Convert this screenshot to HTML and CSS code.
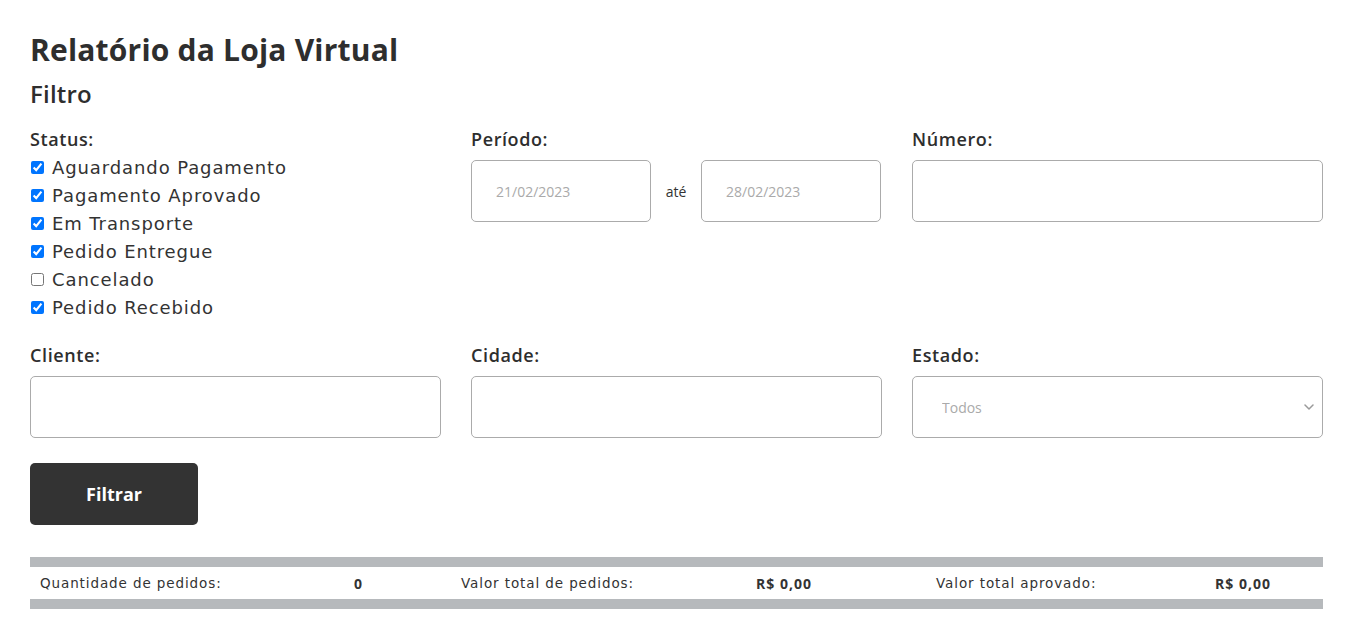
FILE: index.html
```html
<!DOCTYPE html>
<html lang="pt-BR">
<head>
<meta charset="utf-8">
<title>Relatório da Loja Virtual</title>
<link rel="stylesheet" href="styles.css">
</head>
<body>
<main class="page">
  <h1 class="title">Relatório da Loja Virtual</h1>
  <h2 class="subtitle">Filtro</h2>
  <form class="filters">
    <div class="field">
      <span class="label">Status:</span>
      <div class="checks">
        <label class="check"><input type="checkbox" checked> Aguardando Pagamento</label>
        <label class="check"><input type="checkbox" checked> Pagamento Aprovado</label>
        <label class="check"><input type="checkbox" checked> Em Transporte</label>
        <label class="check"><input type="checkbox" checked> Pedido Entregue</label>
        <label class="check"><input type="checkbox"> Cancelado</label>
        <label class="check"><input type="checkbox" checked> Pedido Recebido</label>
      </div>
    </div>
    <div class="field">
      <span class="label">Período:</span>
      <div class="period">
        <input class="input date" type="text" placeholder="21/02/2023">
        <span class="ate">até</span>
        <input class="input date" type="text" placeholder="28/02/2023">
      </div>
    </div>
    <div class="field">
      <span class="label">Número:</span>
      <input class="input" type="text">
    </div>
    <div class="field">
      <span class="label">Cliente:</span>
      <input class="input" type="text">
    </div>
    <div class="field">
      <span class="label">Cidade:</span>
      <input class="input" type="text">
    </div>
    <div class="field">
      <span class="label">Estado:</span>
      <div class="select-wrap">
        <select class="input select"><option>Todos</option></select>
        <svg class="chevron" width="10" height="6" viewBox="0 0 10 6" aria-hidden="true"><path d="M1 1l4 4 4-4" fill="none" stroke="#9a9a9a" stroke-width="1.5" stroke-linecap="round" stroke-linejoin="round"/></svg>
      </div>
    </div>
    <div class="actions">
      <button type="button" class="btn">Filtrar</button>
    </div>
  </form>
  <div class="summary">
    <span class="s-label">Quantidade de pedidos:</span>
    <span class="s-value">0</span>
    <span class="s-label">Valor total de pedidos:</span>
    <span class="s-value">R$ 0,00</span>
    <span class="s-label">Valor total aprovado:</span>
    <span class="s-value">R$ 0,00</span>
  </div>
</main>
</body>
</html>
```
FILE: styles.css
```css
* { box-sizing: border-box; }
body {
  margin: 0;
  background: #fff;
  color: #333;
  font-family: "Open Sans", "DejaVu Sans", sans-serif;
}
.page { padding: 31px 33px 0 30px; }
.title {
  margin: 0;
  font-size: 30px;
  line-height: 38px;
  font-weight: 700;
  color: #2e2e2e;
  letter-spacing: 0.2px;
}
.subtitle {
  margin: 9px 0 0;
  font-size: 24px;
  line-height: 32px;
  font-weight: 600;
  color: #2e2e2e;
  letter-spacing: 0.2px;
}
.filters {
  margin-top: 18px;
  display: grid;
  grid-template-columns: repeat(3, 1fr);
  column-gap: 30px;
  row-gap: 23px;
}
.field { display: flex; flex-direction: column; }
.label {
  font-size: 18px;
  line-height: 22px;
  font-weight: 600;
  color: #2e2e2e;
  margin-bottom: 10px;
  letter-spacing: 0.6px;
}
.checks { margin-top: -7px; }
.check {
  display: flex;
  align-items: center;
  height: 28px;
  font-family: "DejaVu Sans", sans-serif;
  font-size: 18px;
  letter-spacing: 0.9px;
  color: #333;
}
.check input {
  margin: 0 8px 0 1px;
  width: 13px;
  height: 13px;
}
.input {
  height: 62px;
  width: 100%;
  border: 1px solid #ababab;
  border-radius: 5px;
  padding: 0 24px;
  font-family: inherit;
  font-size: 14px;
  color: #333;
  background: #fff;
}
.input::placeholder { color: #aaa; }
.period { display: flex; align-items: center; }
.period .date { width: 180px; }
.ate { font-size: 14px; width: 50px; text-align: center; }
.select-wrap { position: relative; }
.select {
  appearance: none;
  -webkit-appearance: none;
  color: #aaa;
  padding-left: 29px;
}
.chevron {
  position: absolute;
  right: 9px;
  top: 28px;
  pointer-events: none;
}
.actions { grid-column: 1 / -1; margin-top: 2px; }
.btn {
  width: 168px;
  height: 62px;
  border: 0;
  border-radius: 5px;
  background: #333;
  color: #fff;
  font-family: inherit;
  font-size: 18px;
  font-weight: 700;
}
.summary {
  margin-top: 32px;
  display: grid;
  grid-template-columns: 314px 107px 295px 180px 279px 1fr;
  align-items: center;
  height: 52px;
  padding-left: 10px;
  border-top: 10px solid #b6b9bc;
  border-bottom: 10px solid #b6b9bc;
  font-size: 14px;
  color: #333;
}
.s-label { font-family: "DejaVu Sans", sans-serif; font-size: 13.5px; letter-spacing: 0.9px; }
.s-value { font-weight: 700; letter-spacing: 1px; }
```
